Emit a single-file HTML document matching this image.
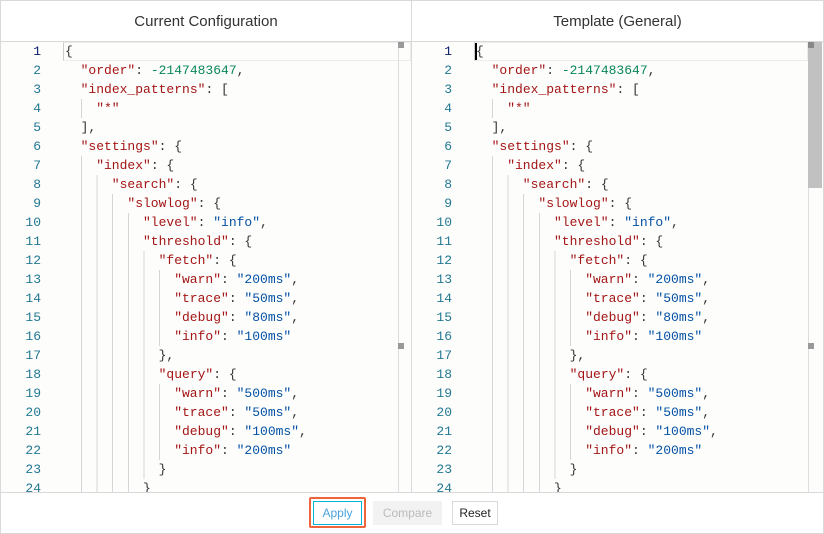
<!DOCTYPE html>
<html><head><meta charset="utf-8"><style>
*{margin:0;padding:0;box-sizing:border-box}
body{width:824px;height:534px;background:#fff;font-family:"Liberation Sans",sans-serif;position:relative;overflow:hidden}
.frame{position:absolute;left:0;top:0;width:824px;height:534px;border:1px solid #d9d9d9}
.hdr{position:absolute;top:0;height:42px;border-bottom:1px solid #d9d9d9;text-align:center;line-height:44px;font-size:15px;color:#333}
.vsep{position:absolute;left:411px;top:0;width:1px;height:492px;background:#d9d9d9}
.ed{position:absolute;top:42px;height:450px;overflow:hidden;background:#fdfdfc}
.ln{position:absolute;top:0;width:40px;text-align:right;font-family:"Liberation Mono",monospace;font-size:13px;line-height:19px;color:#237893}
.ln div:first-child{color:#0b216f}
.code{position:absolute;top:0;font-family:"Liberation Mono",monospace;font-size:13px;line-height:19px;color:#333}
.code div{height:19px;white-space:pre}
.g{background:repeating-linear-gradient(90deg,#d6d6d6 0 1px,transparent 1px 15.6px);display:inline-block;height:19px;vertical-align:top}
.k{color:#a31515}.s{color:#0451a5}.n{color:#098658}
.foot{position:absolute;left:1px;top:492px;width:822px;height:41px;border-top:1px solid #d9d9d9}
.btn{position:absolute;top:501px;height:24px;font-size:12px;line-height:22px;text-align:center;border:1px solid #d9d9d9}
</style></head><body>
<div class="frame"></div>
<div class="hdr" style="left:1px;width:410px">Current Configuration</div>
<div class="hdr" style="left:412px;width:411px">Template (General)</div>
<div class="vsep"></div>

<div class="ed" style="left:1px;width:410px">
 <div style="position:absolute;left:62px;top:0;width:348px;height:19px;border:1px solid #ececec;border-left-color:#ccc"></div>
 <div style="position:absolute;left:397px;top:0;width:1px;height:450px;background:#ddd"></div>
 <div style="position:absolute;left:397px;top:0;width:6px;height:6px;background:#999"></div>
 <div style="position:absolute;left:397px;top:301px;width:6px;height:6px;background:#999"></div>
 <div class="ln"><div>1</div><div>2</div><div>3</div><div>4</div><div>5</div><div>6</div><div>7</div><div>8</div><div>9</div><div>10</div><div>11</div><div>12</div><div>13</div><div>14</div><div>15</div><div>16</div><div>17</div><div>18</div><div>19</div><div>20</div><div>21</div><div>22</div><div>23</div><div>24</div></div>
 <div class="code" style="left:64px"><div>{</div><div>  <span class="k">"order"</span>: <span class="n">-2147483647</span>,</div><div>  <span class="k">"index_patterns"</span>: [</div><div>  <span class="g" style="width:15.6px"></span><span class="k">"*"</span></div><div>  ],</div><div>  <span class="k">"settings"</span>: {</div><div>  <span class="g" style="width:15.6px"></span><span class="k">"index"</span>: {</div><div>  <span class="g" style="width:31.2px"></span><span class="k">"search"</span>: {</div><div>  <span class="g" style="width:46.8px"></span><span class="k">"slowlog"</span>: {</div><div>  <span class="g" style="width:62.4px"></span><span class="k">"level"</span>: <span class="s">"info"</span>,</div><div>  <span class="g" style="width:62.4px"></span><span class="k">"threshold"</span>: {</div><div>  <span class="g" style="width:78px"></span><span class="k">"fetch"</span>: {</div><div>  <span class="g" style="width:93.6px"></span><span class="k">"warn"</span>: <span class="s">"200ms"</span>,</div><div>  <span class="g" style="width:93.6px"></span><span class="k">"trace"</span>: <span class="s">"50ms"</span>,</div><div>  <span class="g" style="width:93.6px"></span><span class="k">"debug"</span>: <span class="s">"80ms"</span>,</div><div>  <span class="g" style="width:93.6px"></span><span class="k">"info"</span>: <span class="s">"100ms"</span></div><div>  <span class="g" style="width:78px"></span>},</div><div>  <span class="g" style="width:78px"></span><span class="k">"query"</span>: {</div><div>  <span class="g" style="width:93.6px"></span><span class="k">"warn"</span>: <span class="s">"500ms"</span>,</div><div>  <span class="g" style="width:93.6px"></span><span class="k">"trace"</span>: <span class="s">"50ms"</span>,</div><div>  <span class="g" style="width:93.6px"></span><span class="k">"debug"</span>: <span class="s">"100ms"</span>,</div><div>  <span class="g" style="width:93.6px"></span><span class="k">"info"</span>: <span class="s">"200ms"</span></div><div>  <span class="g" style="width:78px"></span>}</div><div>  <span class="g" style="width:62.4px"></span>}</div></div>
</div>

<div class="ed" style="left:412px;width:411px">
 <div style="position:absolute;left:62px;top:0;width:334px;height:19px;border:1px solid #ececec;border-left-color:#ccc"></div>
 <div style="position:absolute;left:63px;top:1px;width:2px;height:17px;background:#000"></div>
 <div style="position:absolute;left:396px;top:0;width:1px;height:450px;background:#ddd"></div>
 <div style="position:absolute;left:396px;top:0;width:14px;height:146px;background:#c1c1c1"></div>
 <div style="position:absolute;left:396px;top:0;width:6px;height:6px;background:#888"></div>
 <div style="position:absolute;left:396px;top:301px;width:6px;height:6px;background:#999"></div>
 <div class="ln"><div>1</div><div>2</div><div>3</div><div>4</div><div>5</div><div>6</div><div>7</div><div>8</div><div>9</div><div>10</div><div>11</div><div>12</div><div>13</div><div>14</div><div>15</div><div>16</div><div>17</div><div>18</div><div>19</div><div>20</div><div>21</div><div>22</div><div>23</div><div>24</div></div>
 <div class="code" style="left:64px"><div>{</div><div>  <span class="k">"order"</span>: <span class="n">-2147483647</span>,</div><div>  <span class="k">"index_patterns"</span>: [</div><div>  <span class="g" style="width:15.6px"></span><span class="k">"*"</span></div><div>  ],</div><div>  <span class="k">"settings"</span>: {</div><div>  <span class="g" style="width:15.6px"></span><span class="k">"index"</span>: {</div><div>  <span class="g" style="width:31.2px"></span><span class="k">"search"</span>: {</div><div>  <span class="g" style="width:46.8px"></span><span class="k">"slowlog"</span>: {</div><div>  <span class="g" style="width:62.4px"></span><span class="k">"level"</span>: <span class="s">"info"</span>,</div><div>  <span class="g" style="width:62.4px"></span><span class="k">"threshold"</span>: {</div><div>  <span class="g" style="width:78px"></span><span class="k">"fetch"</span>: {</div><div>  <span class="g" style="width:93.6px"></span><span class="k">"warn"</span>: <span class="s">"200ms"</span>,</div><div>  <span class="g" style="width:93.6px"></span><span class="k">"trace"</span>: <span class="s">"50ms"</span>,</div><div>  <span class="g" style="width:93.6px"></span><span class="k">"debug"</span>: <span class="s">"80ms"</span>,</div><div>  <span class="g" style="width:93.6px"></span><span class="k">"info"</span>: <span class="s">"100ms"</span></div><div>  <span class="g" style="width:78px"></span>},</div><div>  <span class="g" style="width:78px"></span><span class="k">"query"</span>: {</div><div>  <span class="g" style="width:93.6px"></span><span class="k">"warn"</span>: <span class="s">"500ms"</span>,</div><div>  <span class="g" style="width:93.6px"></span><span class="k">"trace"</span>: <span class="s">"50ms"</span>,</div><div>  <span class="g" style="width:93.6px"></span><span class="k">"debug"</span>: <span class="s">"100ms"</span>,</div><div>  <span class="g" style="width:93.6px"></span><span class="k">"info"</span>: <span class="s">"200ms"</span></div><div>  <span class="g" style="width:78px"></span>}</div><div>  <span class="g" style="width:62.4px"></span>}</div></div>
</div>

<div class="foot"></div>
<div style="position:absolute;left:309px;top:497px;width:57px;height:31px;border:2px solid #f0643c;border-radius:2px"></div>
<div class="btn" style="left:313px;width:49px;border-color:#00b4d8;color:#4aa3df;top:501px">Apply</div>
<div class="btn" style="left:373px;width:69px;background:#f2f2f2;border-color:#f2f2f2;color:#bbb">Compare</div>
<div class="btn" style="left:452px;width:46px;color:#222;background:#fff">Reset</div>
</body></html>
